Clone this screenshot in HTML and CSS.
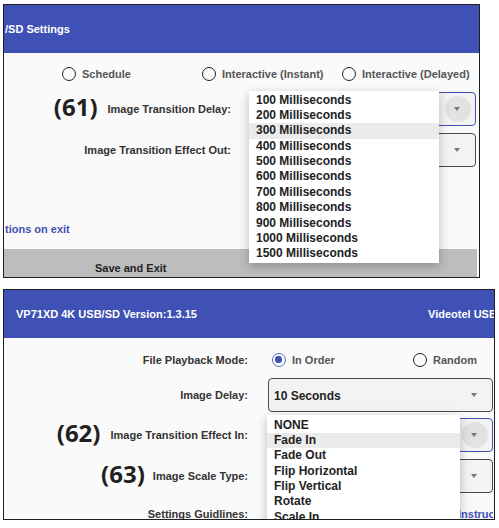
FILE: index.html
```html
<!DOCTYPE html>
<html>
<head>
<meta charset="utf-8">
<title>Settings</title>
<link rel="stylesheet" href="styles.css">
</head>
<body>
<div class="panel p1">
  <div class="hdr"><span class="hdr-title">/SD Settings</span></div>
  <div class="radios r1">
    <div class="radio"><span class="circle"></span>Schedule</div>
    <div class="radio"><span class="circle"></span>Interactive (Instant)</div>
    <div class="radio"><span class="circle"></span>Interactive (Delayed)</div>
  </div>
  <div class="row">
    <div class="lbl"><span class="num">(61)</span>Image Transition Delay:</div>
    <div class="ctl select focus"><span class="ripple"></span><span class="arrow"></span></div>
  </div>
  <div class="row">
    <div class="lbl">Image Transition Effect Out:</div>
    <div class="ctl select"><span class="arrow"></span></div>
  </div>
  <div class="link">tions on exit</div>
  <div class="save">Save and Exit</div>
  <ul class="menu m1">
    <li>100 Milliseconds</li>
    <li>200 Milliseconds</li>
    <li class="hl">300 Milliseconds</li>
    <li>400 Milliseconds</li>
    <li>500 Milliseconds</li>
    <li>600 Milliseconds</li>
    <li>700 Milliseconds</li>
    <li>800 Milliseconds</li>
    <li>900 Milliseconds</li>
    <li>1000 Milliseconds</li>
    <li>1500 Milliseconds</li>
  </ul>
</div>

<div class="panel p2">
  <div class="hdr"><span class="hdr-title">VP71XD 4K USB/SD Version:1.3.15</span><span class="hdr-right">Videotel USB</span></div>
  <div class="row short">
    <div class="lbl">File Playback Mode:</div>
    <div class="ctl radios r2">
      <div class="radio"><span class="circle on"></span>In Order</div>
      <div class="radio"><span class="circle"></span>Random</div>
    </div>
  </div>
  <div class="row">
    <div class="lbl">Image Delay:</div>
    <div class="ctl select">10 Seconds<span class="arrow"></span></div>
  </div>
  <div class="row">
    <div class="lbl"><span class="num">(62)</span>Image Transition Effect In:</div>
    <div class="ctl select focus"><span class="ripple"></span><span class="arrow"></span></div>
  </div>
  <div class="row">
    <div class="lbl"><span class="num tight">(63)</span>Image Scale Type:</div>
    <div class="ctl select"><span class="arrow"></span></div>
  </div>
  <div class="row guide">
    <div class="lbl">Settings Guidlines:</div>
    <div class="ctl instr">Instructions</div>
  </div>
  <ul class="menu m2">
    <li>NONE</li>
    <li class="hl">Fade In</li>
    <li>Fade Out</li>
    <li>Flip Horizontal</li>
    <li>Flip Vertical</li>
    <li>Rotate</li>
    <li>Scale In</li>
    <li>Scale Out</li>
  </ul>
</div>
</body>
</html>
```

FILE: styles.css
```css
body {
  margin: 0;
  background: #ffffff;
  font-family: "Liberation Sans", Arial, sans-serif;
  font-weight: 700;
  font-size: 11px;
  color: #333;
}

.panel {
  position: relative;
  box-sizing: border-box;
  border: 1px solid #1e1e1e;
  background: #fafafa;
  overflow: hidden;
  display: flex;
  flex-direction: column;
}

.p1 {
  margin: 4px 0 0 3px;
  width: 477px;
  height: 274px;
}

.p2 {
  margin: 11px 0 0 3px;
  width: 492px;
  height: 231px;
}

.hdr {
  flex: none;
  height: 48px;
  background: #3f51b5;
  color: #fff;
  display: flex;
  align-items: center;
  white-space: nowrap;
}

.p1 .hdr { padding-left: 1px; }
.p2 .hdr { padding-left: 12px; }
.p2 .hdr-title { width: 412px; flex: none; }
.hdr-right { flex: none; }

.radios {
  display: grid;
  align-items: center;
  color: #555;
}

.r1 {
  flex: none;
  height: 22px;
  grid-template-columns: repeat(3, 140px);
  margin: 10px 0 0 58px;
}

.r2 {
  grid-template-columns: repeat(2, 141px);
  padding-left: 4px;
  box-sizing: border-box;
}

.radio {
  display: flex;
  align-items: center;
  gap: 6px;
  white-space: nowrap;
}

.circle {
  flex: none;
  width: 14px;
  height: 14px;
  box-sizing: border-box;
  border: 1.8px solid #222;
  border-radius: 50%;
  position: relative;
}

.circle.on {
  border-color: #5c6bc0;
}

.circle.on::after {
  content: "";
  position: absolute;
  left: 2px;
  top: 2px;
  width: 6.5px;
  height: 6.5px;
  border-radius: 50%;
  background: #3f51b5;
}

.row {
  flex: none;
  display: flex;
  align-items: center;
  height: 34px;
  margin-top: 7px;
}

.row.short {
  height: 22px;
  margin-top: 11px;
}

.row.short + .row { margin-top: 7px; }
.row.short + .row + .row { margin-top: 6px; }
.row.guide { height: 28px; }

.lbl {
  flex: none;
  display: flex;
  justify-content: flex-end;
  align-items: center;
  gap: 10px;
  white-space: nowrap;
  color: #333;
}

.p1 .lbl { width: 227px; }
.p1 .ctl { margin-left: 19px; width: 226px; }
.p2 .lbl { width: 244px; }
.p2 .ctl { margin-left: 20px; width: 225px; }

.num {
  font-family: "Open Sans", "DejaVu Sans", sans-serif;
  font-weight: 700;
  font-size: 24px;
  line-height: 1;
  color: #231f20;
  margin-top: -5px;
}

.num.tight { margin-right: -2px; }

.select {
  flex: none;
  position: relative;
  box-sizing: border-box;
  height: 34px;
  border: 1px solid #4a4a4a;
  border-radius: 4px;
  background: #f3f3f3;
  display: flex;
  align-items: center;
  padding: 2px 0 0 5px;
  font-size: 12px;
  color: #222;
}

.select.focus {
  border: 1.5px solid #3f51b5;
}

.arrow {
  position: absolute;
  right: 15px;
  top: 50%;
  margin-top: -2px;
  border-left: 3.5px solid transparent;
  border-right: 3.5px solid transparent;
  border-top: 4px solid #777;
}

.ripple {
  position: absolute;
  right: 4px;
  top: 50%;
  width: 26px;
  height: 26px;
  margin-top: -13px;
  border-radius: 50%;
  background: #e2e2e2;
}

.link {
  flex: none;
  margin-top: 55px;
  padding-left: 1px;
  line-height: 14px;
  color: #3f51b5;
}

.save {
  flex: none;
  margin-top: auto;
  margin-right: 2px;
  height: 28px;
  box-sizing: border-box;
  background: #bdbdbd;
  display: flex;
  align-items: flex-end;
  padding: 0 0 2px 91px;
  line-height: 13px;
  color: #222;
}

.instr {
  padding-left: 190px;
  box-sizing: border-box;
  white-space: nowrap;
  overflow: hidden;
  color: #3f51b5;
}

.menu {
  position: absolute;
  margin: 0;
  padding: 0;
  list-style: none;
  background: #fff;
  box-shadow: 0 3px 10px rgba(0, 0, 0, 0.25);
  font-size: 12px;
  color: #222;
}

.menu li {
  height: 15.4px;
  line-height: 15.4px;
  padding-left: 7px;
  white-space: nowrap;
}

.menu li.hl { background: #ebebeb; }

.m1 {
  left: 245px;
  top: 86px;
  width: 190px;
  padding: 1.5px 0 1px;
}

.m2 {
  left: 263px;
  top: 125px;
  width: 193px;
  padding-top: 2.5px;
}
```
